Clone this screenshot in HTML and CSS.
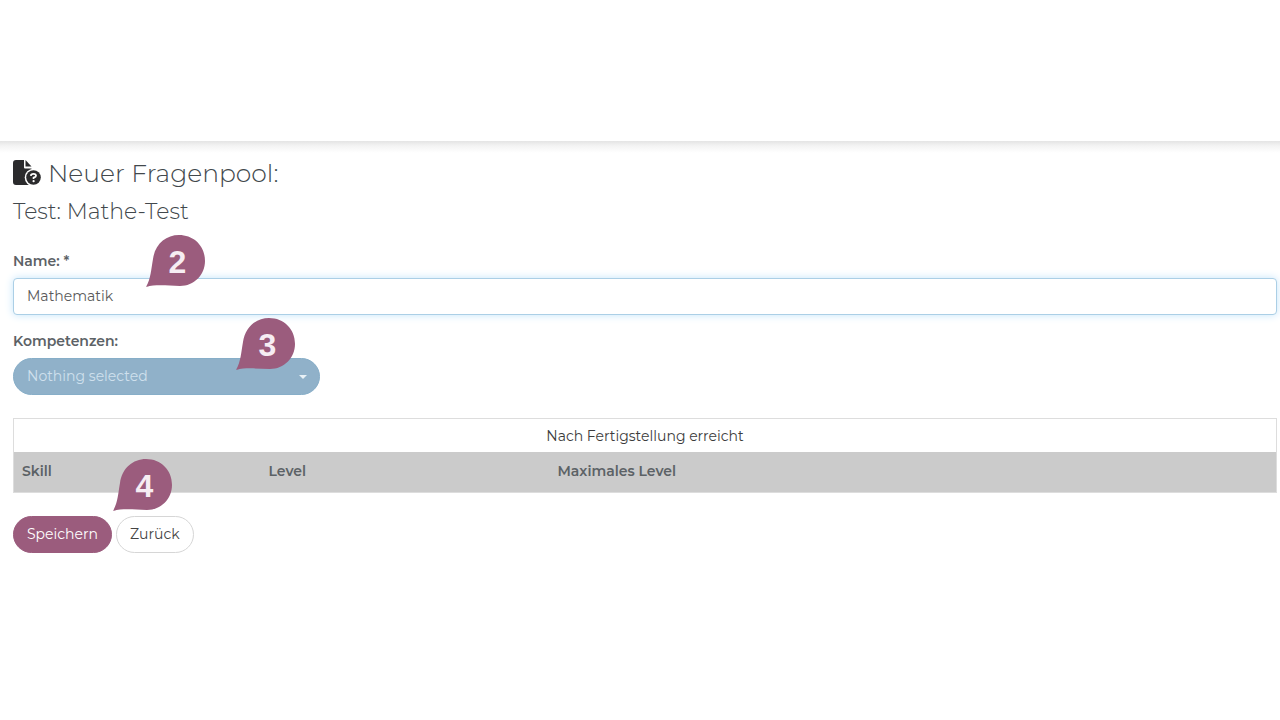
FILE: index.html
```html
<!DOCTYPE html>
<html lang="de">
<head>
    <meta charset="UTF-8">
    <meta name="viewport" content="width=device-width, initial-scale=1.0">
    <title>Neuer Fragenpool</title>
    <link rel="stylesheet" href="styles.css">
</head>
<body>
    <header class="page-header"></header>

    <main class="content">
        <h1>
            <svg class="title-icon" viewBox="0 0 28 26" aria-hidden="true">
                <path fill="#2b2b2d" d="M3 0H11V7.500Q11 8.500 12 8.500H18.500V25H3Q0 25 0 22V3Q0 0 3 0Z"/>
                <path fill="#2b2b2d" d="M12.500 0L18.500 6.500H12.500Z"/>
                <circle cx="20.500" cy="17.500" r="8.800" fill="#fff"/>
                <circle cx="20.500" cy="17.500" r="7.300" fill="#2b2b2d"/>
                <path fill="none" stroke="#fff" stroke-width="1.800" d="M17.800 15.800Q18 13.800 20.500 13.800Q23 13.800 23 15.800Q23 17 20.600 17.700V19"/>
                <circle cx="20.600" cy="21.200" r="1.100" fill="#fff"/>
            </svg>
            Neuer Fragenpool:
        </h1>
        <h2>Test: Mathe-Test</h2>

        <form>
            <div class="field">
                <label for="name">Name: *</label>
                <input type="text" id="name" class="text-input" value="Mathematik">
                <span class="marker marker-name">
                    <svg viewBox="0 0 59 52" aria-hidden="true"><path d="M0 52C5 43 5 35 7 24C9 9 20 0 33 0C48 0 59 11 59 26C59 40 48 51 34 51C22 51 11 49 0 52Z"/></svg>
                    <b>2</b>
                </span>
            </div>

            <div class="field">
                <label for="skills">Kompetenzen:</label>
                <div class="select-wrap">
                    <select id="skills">
                        <option>Nothing selected</option>
                    </select>
                </div>
                <span class="marker marker-skills">
                    <svg viewBox="0 0 59 52" aria-hidden="true"><path d="M0 52C5 43 5 35 7 24C9 9 20 0 33 0C48 0 59 11 59 26C59 40 48 51 34 51C22 51 11 49 0 52Z"/></svg>
                    <b>3</b>
                </span>
            </div>

            <table class="skill-table">
                <colgroup>
                    <col class="col-skill">
                    <col class="col-level">
                    <col>
                </colgroup>
                <thead>
                    <tr class="table-title">
                        <th colspan="3">Nach Fertigstellung erreicht</th>
                    </tr>
                    <tr class="table-columns">
                        <th>Skill</th>
                        <th>Level</th>
                        <th>Maximales Level</th>
                    </tr>
                </thead>
            </table>

            <div class="actions">
                <button type="submit" class="btn btn-primary">Speichern</button>
                <button type="button" class="btn">Zurück</button>
                <span class="marker marker-save">
                    <svg viewBox="0 0 59 52" aria-hidden="true"><path d="M0 52C5 43 5 35 7 24C9 9 20 0 33 0C48 0 59 11 59 26C59 40 48 51 34 51C22 51 11 49 0 52Z"/></svg>
                    <b>4</b>
                </span>
            </div>
        </form>
    </main>
</body>
</html>
```
FILE: styles.css
```css
* {
    box-sizing: border-box;
}

body {
    margin: 0;
    background-color: #fff;
    color: #5c6266;
    font-family: Montserrat, Inter, sans-serif;
    font-size: 14px;
    line-height: 20px;
}

.page-header {
    height: 141px;
}

.content {
    padding: 14px 3px 24px 13px;
    background: linear-gradient(#e4e4e4, #f4f4f4 5px, #fff 12px);
}

h1,
h2 {
    margin: 0;
    color: #42484c;
    font-weight: 300;
}

h1 {
    display: flex;
    align-items: center;
    gap: 7px;
    font-size: 25px;
    line-height: 36px;
}

h2 {
    margin-top: 7px;
    font-size: 22px;
    line-height: 28px;
}

.title-icon {
    width: 28px;
    height: 26px;
}

form {
    margin-top: 25px;
}

.field {
    position: relative;
    margin-bottom: 16px;
}

label {
    display: block;
    margin-bottom: 7px;
    font-weight: 600;
}

.text-input,
select,
.btn {
    height: 37px;
    font-family: inherit;
    font-size: 14px;
}

.text-input {
    display: block;
    width: 100%;
    padding: 0 13px 2px;
    border: 1px solid #abcfe6;
    border-radius: 4px;
    outline: none;
    background-color: #fff;
    color: #5a5a5a;
    box-shadow: 0 0 8px #c4e4fa;
}

.select-wrap {
    position: relative;
    width: 307px;
    max-width: 100%;
}

.select-wrap::after {
    content: "";
    position: absolute;
    top: 17px;
    right: 13px;
    border: 4px solid transparent;
    border-top-color: #e8f1f6;
    border-bottom: 0;
    pointer-events: none;
}

select {
    display: block;
    width: 100%;
    padding: 0 13px 2px;
    border: 1px solid #87aec8;
    border-radius: 19px;
    appearance: none;
    background-color: #90b1c9;
    color: #cfe0ed;
}

.skill-table {
    width: 100%;
    margin-top: 23px;
    border: 1px solid #ddd;
    border-collapse: collapse;
    table-layout: fixed;
}

.skill-table th {
    padding: 9px 8px 11px;
    font-weight: 600;
    text-align: left;
}

.skill-table .table-title th {
    padding: 7px 8px 6px;
    color: #3c3c3c;
    font-weight: 400;
    text-align: center;
}

.table-columns {
    background-color: #cbcbcb;
}

.col-skill {
    width: 247px;
}

.col-level {
    width: 289px;
}

.actions {
    display: flex;
    gap: 4px;
    position: relative;
    margin-top: 23px;
}

.btn {
    padding: 0 13px 2px;
    border: 1px solid #d6d6d6;
    border-radius: 19px;
    background-color: #fff;
    color: #444;
    cursor: pointer;
}

.btn-primary {
    border-color: #9b5c7d;
    background-color: #9b5c7d;
    color: #fff;
}

/* numbered step markers */
.marker {
    position: absolute;
    width: 59px;
    height: 52px;
    pointer-events: none;
}

.marker svg {
    display: block;
    width: 100%;
    height: 100%;
    fill: #9b5c7d;
}

.marker b {
    position: absolute;
    top: 0;
    left: 2px;
    width: 100%;
    color: #f6edf3;
    font-family: "Liberation Sans", Arial, sans-serif;
    font-size: 32px;
    line-height: 54px;
    text-align: center;
}

.marker-name {
    top: -16px;
    left: 133px;
}

.marker-skills {
    top: -13px;
    left: 223px;
}

.marker-save {
    top: -57px;
    left: 100px;
}
```
